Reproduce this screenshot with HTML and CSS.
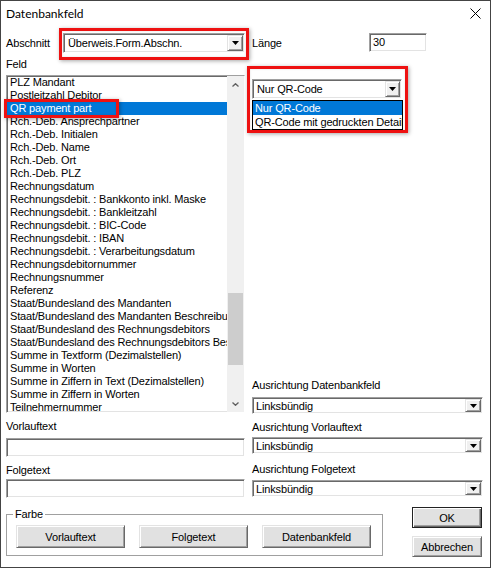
FILE: index.html
```html
<!DOCTYPE html>
<html lang="de">
<head>
<meta charset="utf-8">
<title>Datenbankfeld</title>
<link rel="stylesheet" href="styles.css">
</head>
<body>
<div class="win">
  <div class="titlebar">
    <span class="title">Datenbankfeld</span>
    <svg class="close" width="11" height="11" viewBox="0 0 11 11"><path d="M0.5 0.5L10.5 10.5M10.5 0.5L0.5 10.5" stroke="#000" stroke-width="1" fill="none"/></svg>
  </div>
  <div class="content">
    <div class="cols">
      <div class="col-left">
        <div class="row-top">
          <span class="lbl lbl-abschnitt">Abschnitt</span>
          <div class="hl-wrap">
            <div class="combo sunken combo-tall">
              <span class="combo-val">Überweis.Form.Abschn.</span>
              <span class="combo-btn"><svg width="7" height="4" viewBox="0 0 7 4"><path d="M0 0H7L3.5 4Z" fill="#000"/></svg></span>
            </div>
            <div class="hl hl-abschnitt"></div>
          </div>
        </div>
        <div class="lbl lbl-feld">Feld</div>
        <div class="list-wrap">
          <div class="list sunken">
            <div class="items">
              <div class="item">PLZ Mandant</div>
              <div class="item">Postleitzahl Debitor</div>
              <div class="item sel">QR payment part</div>
              <div class="item">Rch.-Deb. Ansprechpartner</div>
              <div class="item">Rch.-Deb. Initialen</div>
              <div class="item">Rch.-Deb. Name</div>
              <div class="item">Rch.-Deb. Ort</div>
              <div class="item">Rch.-Deb. PLZ</div>
              <div class="item">Rechnungsdatum</div>
              <div class="item">Rechnungsdebit. : Bankkonto inkl. Maske</div>
              <div class="item">Rechnungsdebit. : Bankleitzahl</div>
              <div class="item">Rechnungsdebit. : BIC-Code</div>
              <div class="item">Rechnungsdebit. : IBAN</div>
              <div class="item">Rechnungsdebit. : Verarbeitungsdatum</div>
              <div class="item">Rechnungsdebitornummer</div>
              <div class="item">Rechnungsnummer</div>
              <div class="item">Referenz</div>
              <div class="item">Staat/Bundesland des Mandanten</div>
              <div class="item">Staat/Bundesland des Mandanten Beschreibung</div>
              <div class="item">Staat/Bundesland des Rechnungsdebitors</div>
              <div class="item">Staat/Bundesland des Rechnungsdebitors Beschreibung</div>
              <div class="item">Summe in Textform (Dezimalstellen)</div>
              <div class="item">Summe in Worten</div>
              <div class="item">Summe in Ziffern in Text (Dezimalstellen)</div>
              <div class="item">Summe in Ziffern in Worten</div>
              <div class="item">Teilnehmernummer</div>
            </div>
            <div class="sbar">
              <div class="sb-btn"><svg width="7" height="4" viewBox="0 0 7 4"><path d="M0.5 3.5L3.5 0.7L6.5 3.5" fill="none" stroke="#606060" stroke-width="1.3"/></svg></div>
              <div class="sb-track"><div class="thumb"></div></div>
              <div class="sb-btn"><svg width="7" height="4" viewBox="0 0 7 4"><path d="M0.5 0.5L3.5 3.3L6.5 0.5" fill="none" stroke="#606060" stroke-width="1.3"/></svg></div>
            </div>
          </div>
          <div class="hl hl-qr"></div>
        </div>
        <div class="lbl lbl-vor">Vorlauftext</div>
        <div class="field sunken field-vor"></div>
        <div class="lbl lbl-folge">Folgetext</div>
        <div class="field sunken field-folge"></div>
      </div>
      <div class="col-right">
        <div class="row-top">
          <span class="lbl lbl-laenge">Länge</span>
          <div class="field sunken field-len">30</div>
        </div>
        <div class="hl-wrap qr-wrap">
          <div class="combo sunken combo-qr">
            <span class="combo-val">Nur QR-Code</span>
            <span class="combo-btn"><svg width="7" height="4" viewBox="0 0 7 4"><path d="M0 0H7L3.5 4Z" fill="#000"/></svg></span>
          </div>
          <div class="popup">
            <div class="pop-item sel">Nur QR-Code</div>
            <div class="pop-item">QR-Code mit gedruckten Details</div>
          </div>
          <div class="hl hl-qrcombo"></div>
        </div>
        <div class="lbl lbl-adb">Ausrichtung Datenbankfeld</div>
        <div class="combo sunken combo-r combo-r1">
          <span class="combo-val">Linksbündig</span>
          <span class="combo-btn"><svg width="7" height="4" viewBox="0 0 7 4"><path d="M0 0H7L3.5 4Z" fill="#000"/></svg></span>
        </div>
        <div class="lbl lbl-avt">Ausrichtung Vorlauftext</div>
        <div class="combo sunken combo-r combo-r2">
          <span class="combo-val">Linksbündig</span>
          <span class="combo-btn"><svg width="7" height="4" viewBox="0 0 7 4"><path d="M0 0H7L3.5 4Z" fill="#000"/></svg></span>
        </div>
        <div class="lbl lbl-aft">Ausrichtung Folgetext</div>
        <div class="combo sunken combo-r combo-r3">
          <span class="combo-val">Linksbündig</span>
          <span class="combo-btn"><svg width="7" height="4" viewBox="0 0 7 4"><path d="M0 0H7L3.5 4Z" fill="#000"/></svg></span>
        </div>
      </div>
    </div>
    <div class="bottom">
      <div class="group">
        <span class="legend">Farbe</span>
        <button class="btn btn-g1">Vorlauftext</button>
        <button class="btn btn-g2">Folgetext</button>
        <button class="btn btn-g3">Datenbankfeld</button>
      </div>
      <div class="actions">
        <button class="btn btn-default">OK</button>
        <button class="btn btn-act">Abbrechen</button>
      </div>
    </div>
  </div>
</div>
</body>
</html>
```

FILE: styles.css
```css
* { box-sizing: border-box; }
html, body { margin: 0; padding: 0; background: #fff; }
body {
  font-family: "Liberation Sans", Arial, sans-serif;
  font-size: 11px;
  letter-spacing: -0.15px;
  color: #000;
}

.win {
  width: 491px;
  height: 568px;
  border: 1px solid #444;
  background: #fff;
  display: flex;
  flex-direction: column;
}

.titlebar {
  height: 24px;
  display: flex;
  align-items: center;
  padding-left: 5px;
  padding-right: 9px;
}
.title {
  flex: 1;
  font-family: Lato, "Noto Sans", sans-serif;
  font-size: 12px;
  letter-spacing: 0;
}
.close { display: block; }

.content { padding: 0 7px 0 5px; }

.cols { display: flex; gap: 7px; }
.col-left { width: 239px; display: flex; flex-direction: column; }
.col-right { width: 231px; display: flex; flex-direction: column; padding-bottom: 1px; }

.row-top { display: flex; margin-top: 8px; height: 20px; align-items: flex-start; }

.lbl { line-height: 13px; height: 13px; white-space: nowrap; }
.lbl-abschnitt { width: 57px; height: 20px; line-height: 20px; }
.lbl-laenge { width: 117px; height: 20px; line-height: 20px; }
.lbl-feld { margin-top: 5px; }
.lbl-vor { margin-top: 7px; }
.lbl-folge { margin-top: 7px; }
.lbl-adb { margin-top: auto; }
.lbl-avt { margin-top: 7px; }
.lbl-aft { margin-top: 9px; }

.sunken {
  background: #fff;
  border: 1px solid;
  border-color: #a0a0a0 #fff #fff #a0a0a0;
  box-shadow: inset 1px 1px 0 #696969, inset -1px -1px 0 #e3e3e3;
}

.field { padding: 1px 2px; line-height: 15px; }
.field-vor { margin-top: 5px; height: 19px; width: 239px; }
.field-folge { margin-top: 2px; height: 19px; width: 239px; }
.field-len { width: 58px; height: 19px; padding-left: 3px; }

.hl-wrap { position: relative; }

.combo { display: flex; padding: 1px; }
.combo-val { flex: 1; display: flex; align-items: center; padding-left: 3px; white-space: nowrap; overflow: hidden; }
.combo-btn {
  width: 16px;
  display: flex;
  align-items: center;
  justify-content: center;
  background: #f0f0f0;
  border: 1px solid;
  border-color: #e3e3e3 #696969 #696969 #e3e3e3;
  box-shadow: inset 1px 1px 0 #fff, inset -1px -1px 0 #a0a0a0;
}
.combo-btn svg { display: block; }

.combo-tall { width: 182px; height: 20px; }
.combo-tall .combo-val { padding-left: 3px; }
.combo-qr { width: 150px; height: 20px; }
.qr-wrap { margin-top: 26px; width: 150px; }
.combo-qr .combo-btn { width: 15px; }

.combo-r { height: 17px; width: 231px; }
.combo-r .combo-val { padding-left: 2px; }
.combo-r .combo-btn { width: 16px; }
.combo-r1 { margin-top: 5px; }
.combo-r2 { margin-top: 3px; }
.combo-r3 { margin-top: 4px; }

.popup {
  position: absolute;
  top: calc(100% + 1px);
  left: 0;
  width: 151px;
  border: 1px solid #000;
  background: #fff;
  overflow: hidden;
}
.pop-item { height: 14px; line-height: 14px; padding-left: 2px; white-space: nowrap; }
.pop-item.sel { background: #0078d7; color: #fff; }

.hl {
  position: absolute;
  border: 3px solid #ee1111;
  box-shadow: 1px 1px 4px rgba(0, 0, 0, 0.35), inset 0 0 2px rgba(0, 0, 0, 0.15);
  pointer-events: none;
}
.hl-abschnitt { left: -4px; top: -5px; right: -4px; bottom: -7px; }
.hl-qrcombo { left: -5px; top: -13px; width: 161px; height: 67px; }
.hl-qr { left: -2px; top: 24px; width: 115px; height: 19px; }

.list-wrap { position: relative; margin-top: 4px; }
.list {
  width: 239px;
  height: 338px;
  display: flex;
  overflow: hidden;
}
.items { flex: 1; overflow: hidden; }
.item {
  height: 13px;
  line-height: 13px;
  padding-left: 3px;
  white-space: nowrap;
  overflow: hidden;
}
.item.sel { background: #0078d7; color: #fff; }

.sbar { width: 17px; background: #f0f0f0; display: flex; flex-direction: column; }
.sb-btn { height: 17px; display: flex; align-items: center; justify-content: center; }
.sb-btn svg { display: block; }
.sb-track { flex: 1; }
.thumb { margin: 200px 1px 0 1px; height: 72px; background: #cdcdcd; }

.bottom {
  margin-top: 9px;
  display: flex;
  align-items: flex-start;
  justify-content: space-between;
}

.group {
  position: relative;
  margin-top: 7px;
  width: 377px;
  border: 1px solid #a0a0a0;
  padding: 10px 0 7px 9px;
  display: flex;
  gap: 14px;
}
.legend {
  position: absolute;
  top: -7px;
  left: 6px;
  padding: 0 2px;
  line-height: 13px;
  background: #fff;
}

.btn {
  font: inherit;
  letter-spacing: inherit;
  color: #000;
  background: #e1e1e1;
  border: 1px solid;
  border-color: #e3e3e3 #696969 #696969 #e3e3e3;
  box-shadow: inset 1px 1px 0 #fff, inset -1px -1px 0 #a0a0a0;
  padding: 0;
  margin: 0;
  height: 23px;
  width: 109px;
}

.actions { width: 70px; margin-right: 1px; display: flex; flex-direction: column; gap: 8px; }
.actions .btn { width: 70px; height: 21px; }
.btn-default {
  border: 1px solid #222;
  box-shadow: inset 1px 1px 0 #fff, inset -1px -1px 0 #696969, inset -2px -2px 0 #a0a0a0;
}
```
